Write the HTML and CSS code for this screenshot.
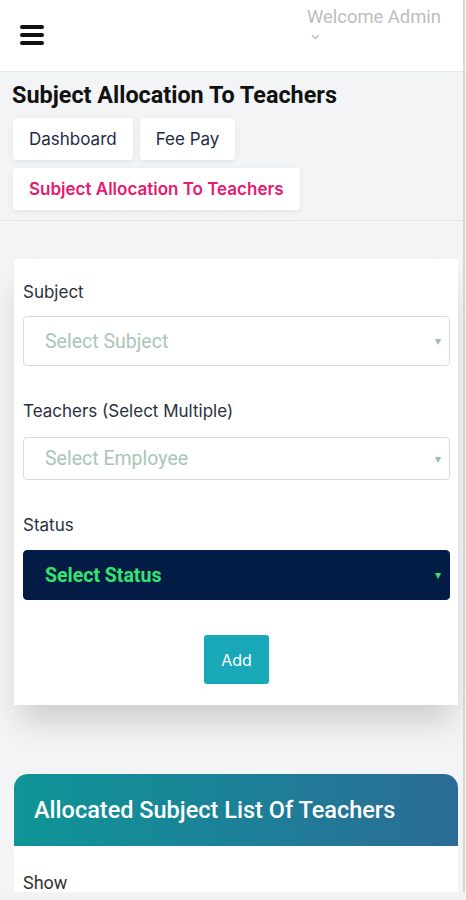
FILE: index.html
```html
<!DOCTYPE html>
<html lang="en">
<head>
<meta charset="utf-8">
<title>Subject Allocation To Teachers</title>
<link rel="stylesheet" href="styles.css">
</head>
<body>
<header class="topbar">
  <div class="hamburger" aria-label="menu">
    <span></span><span></span><span></span>
  </div>
  <div class="welcome">
    <div class="welcome-text">Welcome Admin</div>
    <svg class="chev" width="9" height="6" viewBox="0 0 9 6"><path d="M1 1.2 L4.5 4.5 L8 1.2" fill="none" stroke="#bbb" stroke-width="1.3"/></svg>
  </div>
</header>

<main class="page">
  <h1 class="page-title">Subject Allocation To Teachers</h1>
  <nav class="crumbs">
    <a class="crumb">Dashboard</a>
    <a class="crumb">Fee Pay</a>
    <a class="crumb active">Subject Allocation To Teachers</a>
  </nav>
</main>
<div class="divider"></div>

<section class="form-card">
  <label class="field-label">Subject</label>
  <div class="select tall">
    <span class="placeholder">Select Subject</span>
    <span class="arrow">▾</span>
  </div>

  <label class="field-label">Teachers (Select Multiple)</label>
  <div class="select short">
    <span class="placeholder">Select Employee</span>
    <span class="arrow">▾</span>
  </div>

  <label class="field-label">Status</label>
  <div class="select tall dark">
    <span class="placeholder">Select Status</span>
    <span class="arrow">▾</span>
  </div>

  <div class="actions">
    <button class="btn-add">Add</button>
  </div>
</section>

<section class="list-card">
  <div class="list-head">
    <h2>Allocated Subject List Of Teachers</h2>
  </div>
  <div class="list-body">
    <div class="show">Show</div>
  </div>
</section>

<div class="scroll-line"></div>
<div class="bottom-strip"></div>
</body>
</html>
```

FILE: styles.css
```css
* { box-sizing: border-box; }
html, body { margin: 0; padding: 0; }
body {
  background: #f3f4f6;
  font-family: Roboto, "Liberation Sans", Arial, sans-serif;
  color: #222;
  width: 466px;
  overflow: hidden;
  height: 900px;
}

.topbar {
  height: 72px;
  background: #fff;
  border-bottom: 1px solid #e6e8eb;
  display: flex;
  justify-content: space-between;
  align-items: flex-start;
  padding: 0 25px 0 20px;
}
.hamburger {
  margin-top: 25px;
  display: flex;
  flex-direction: column;
  gap: 4px;
}
.hamburger span {
  display: block;
  width: 24px;
  height: 4px;
  background: #111;
  border-radius: 2px;
}
.welcome {
  padding-top: 6px;
}
.welcome-text {
  color: #bdbdbd;
  font-size: 18.4px;
  line-height: 21px;
}
.chev {
  display: block;
  margin: 7px 0 0 4px;
}

.page {
  padding: 10px 12px 0 12px;
}
.page-title {
  margin: 0;
  font-size: 23.4px;
  line-height: 27px;
  font-weight: 700;
  color: #111;
}
.crumbs {
  display: flex;
  flex-wrap: wrap;
  gap: 8px 7px;
  margin-top: 9px;
  padding-left: 1px;
}
.crumb {
  display: flex;
  align-items: center;
  height: 42px;
  padding: 0 16px;
  background: #fff;
  border-radius: 4px;
  box-shadow: 0 2px 6px rgba(0,0,0,0.07);
  color: #1e2a48;
  font-size: 17px;
  font-family: Inter, Roboto, sans-serif;
}
.crumb.active {
  color: #e8196f;
  font-weight: 600;
  font-size: 17px;
}
.divider {
  margin-top: 10px;
  border-top: 1px solid #e4e6e9;
}

.form-card {
  margin: 38px 8px 0 14px;
  background: #fff;
  padding: 21px 8px 21px 9px;
  box-shadow: 0 22px 30px -6px rgba(0,0,0,0.16);
  display: flex;
  flex-direction: column;
}
.field-label {
  font-family: Inter, Roboto, sans-serif;
  font-size: 17px;
  line-height: 24px;
  color: #2a3140;
}
.select {
  margin-top: 12px;
  margin-bottom: 33px;
  border: 1px solid #d9dcdf;
  border-radius: 4px;
  display: flex;
  align-items: center;
  justify-content: space-between;
  padding: 0 8px 0 21px;
  background: #fff;
}
.select.tall { height: 50px; }
.select.short { height: 43px; margin-top: 14px; }
.select .placeholder {
  font-size: 19.5px;
  color: #a9c5b8;
}
.select .arrow {
  font-size: 12px;
  color: #9dbbae;
}
.select.dark {
  background: #031c45;
  border-color: #031c45;
  margin-top: 13px;
  margin-bottom: 35px;
}
.select.dark .placeholder {
  color: #35e36f;
  font-weight: 700;
}
.select.dark .arrow { color: #35e36f; }

.actions {
  display: flex;
  justify-content: center;
}
.btn-add {
  width: 65px;
  height: 49px;
  border: none;
  border-radius: 3px;
  background: #18a8b8;
  color: #fff;
  font-family: Inter, Roboto, sans-serif;
  font-size: 16px;
}

.list-card {
  margin: 69px 8px 0 14px;
  background: #fff;
  border-radius: 14px 14px 0 0;
  overflow: hidden;
}
.list-head {
  height: 72px;
  background: linear-gradient(90deg, #0e9596 0%, #1c8198 50%, #2b6c95 100%);
  display: flex;
  align-items: center;
  padding: 0 20px;
}
.list-head h2 {
  margin: 0;
  color: #fff;
  font-size: 23.5px;
  font-weight: 500;
}
.list-body {
  padding: 26px 9px 20px;
}
.show {
  font-size: 18px;
  color: #333;
}

.scroll-line {
  position: fixed;
  top: 0;
  right: 1px;
  width: 2px;
  height: 892px;
  background: #d6d6d6;
}
.bottom-strip {
  position: fixed;
  left: 0;
  right: 0;
  bottom: 0;
  height: 8px;
  background: #f2f2f2;
}
```
